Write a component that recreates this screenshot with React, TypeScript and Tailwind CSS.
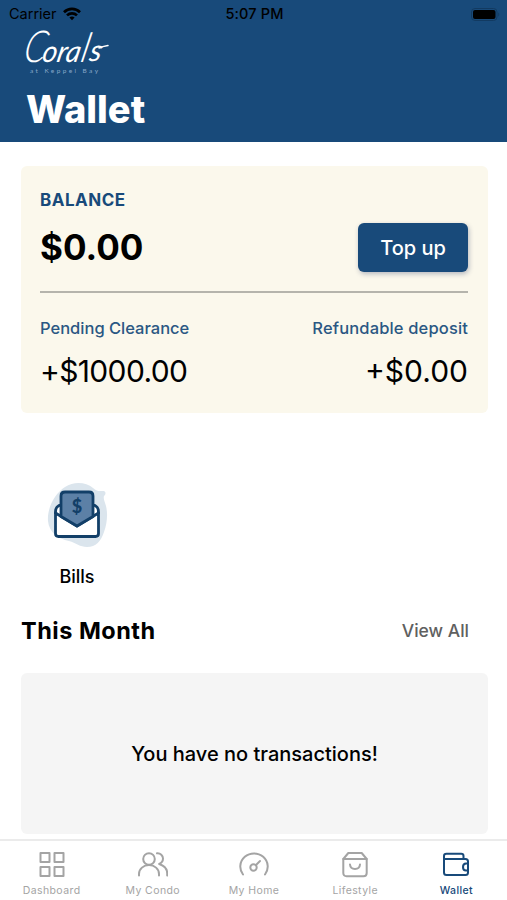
import type { ReactNode } from "react";
import clsx from "clsx";

const WifiIcon = () => (
  <svg width="18" height="14" viewBox="0 0 18 14" fill="none" stroke="currentColor" strokeWidth="2.7">
    <path d="M1 5.2C5.5 .8 12.5 .8 17 5.2" />
    <path d="M4 8.400c2.800-2.700 7.200-2.700 10 0" />
    <path d="M6.400 10.500c1.500-1.300 3.700-1.300 5.200 0L9 13.200z" fill="currentColor" stroke="none" />
  </svg>
);

const BatteryIcon = () => (
  <svg width="29" height="13" viewBox="0 0 29 13">
    <rect x=".5" y=".5" width="25.5" height="12" rx="3.5" fill="none" stroke="#123a61" />
    <rect x="2" y="2" width="22.5" height="9" rx="2" fill="#000" />
    <path d="M27.3 4.500v4c1.200-.5 1.200-3.500 0-4z" fill="#123a61" />
  </svg>
);

const Logo = () => (
  <svg
    className="-mt-5 -ml-2.5 overflow-visible"
    width="120"
    height="75"
    viewBox="-10 -20 120 75"
    fill="#fff"
    fontFamily="Lato, sans-serif"
  >
    <g transform="translate(-2 34) skewX(-12)" fontStyle="italic">
      <text fontSize="30">
        <tspan x="0" y="0" fontSize="44" fontWeight="300" textLength="22" lengthAdjust="spacingAndGlyphs">
          C
        </tspan>
        <tspan x="19" y="0" textLength="38" lengthAdjust="spacingAndGlyphs">
          ora
        </tspan>
        <tspan x="57" y="0" fontSize="41" fontWeight="300">
          l
        </tspan>
        <tspan x="66" y="-1" fontSize="30">
          s
        </tspan>
      </text>
    </g>
    {/* tail of the last letter */}
    <path d="M75 20c3-1.500 6-2 9-2.500" fill="none" stroke="#fff" strokeWidth="1.5" strokeLinecap="round" />
    <text x="6" y="45" fontSize="6.5" fill="#86a7c8" textLength="68" lengthAdjust="spacing">
      at Keppel Bay
    </text>
  </svg>
);

const BillsIcon = () => (
  <svg width="62" height="68" viewBox="0 0 62 68" fill="none">
    <path
      d="M18 6C27 0 39 1 46 7c4 4 7 3 11 3 2 1 2 3 0 5-1 3 1 6 2 10 2 8 1 18-2 26-3 9-8 15-17 15-7 0-11-4-18-6C11 58 2 51 1 40 0 28 7 13 18 6z"
      fill="#dbe5ed"
    />
    <path d="M8.500 33v-2c0-4 2-7 6-7h31c4 0 6 3 6 7v2" fill="#fff" stroke="#123f68" strokeWidth="2.8" />
    <path
      d="M8.500 32 30 45l21.500-13v20.500c0 2-1 3-3 3h-37c-2 0-3-1-3-3z"
      fill="#fff"
      stroke="#123f68"
      strokeWidth="2.8"
      strokeLinejoin="round"
    />
    <path
      d="M14 35.500V15c0-2.500 1.500-4 4-4h24c2.500 0 4 1.500 4 4v20.500L30 45z"
      fill="#5c80a6"
      stroke="#123f68"
      strokeWidth="2.8"
      strokeLinejoin="round"
    />
    <text x="30" y="32" textAnchor="middle" fontFamily="Lato, sans-serif" fontWeight="900" fontSize="18" fill="#123f68">
      $
    </text>
  </svg>
);

const iconProps = {
  width: 30,
  height: 28,
  viewBox: "0 0 30 28",
  fill: "none",
  stroke: "currentColor",
  strokeWidth: 2,
  strokeLinecap: "round" as const,
  strokeLinejoin: "round" as const,
};

const DashboardIcon = () => (
  <svg {...iconProps}>
    <path d="M3.500 3h9v9h-9zM17.500 3h9v9h-9zM3.500 17h9v9h-9zM17.500 17h9v9h-9z" />
  </svg>
);

const CondoIcon = () => (
  <svg {...iconProps}>
    <circle cx="11" cy="9" r="5.800" />
    <path d="M1 25.500V24c0-5 4.500-9 10-9s10 4 10 9v1.500" />
    <path d="M19 3.300c3.500-.3 6 2.200 6 5.200 0 2.800-1.500 4.500-3.800 5.500 4.500 1.500 8 5 8 9.500v2" />
  </svg>
);

const HomeIcon = () => (
  <svg {...iconProps}>
    <path d="M4 24.500A13.700 13.200 0 1 1 26 24.500" />
    <circle cx="14.500" cy="17.500" r="3.200" />
    <path d="m17 15 4-4" />
  </svg>
);

const LifestyleIcon = () => (
  <svg {...iconProps}>
    <path d="m3.300 9 5-6h13.400l5 6v14c0 2-1.200 3.200-3.200 3.200h-17c-2 0-3.200-1.200-3.200-3.200z" />
    <path d="M3.300 9h23.400M10 14.500c.5 6 9.500 6 10 0" />
  </svg>
);

const WalletIcon = () => (
  <svg {...iconProps}>
    <path d="M22.500 9V6c0-1.500-.8-2.300-2.300-2.300H5.500C3.900 3.700 3 4.600 3 6v16.500c0 1.500 1 2.500 2.500 2.500h19c1.500 0 2.500-1 2.500-2.500v-11C27 10 26 9 24.500 9H3.500" />
    <path d="M27 13.500h-2c-4 0-4 7 0 7h2z" />
  </svg>
);

type Tab = { label: string; icon: ReactNode; active?: boolean };

const tabs: Tab[] = [
  { label: "Dashboard", icon: <DashboardIcon /> },
  { label: "My Condo", icon: <CondoIcon /> },
  { label: "My Home", icon: <HomeIcon /> },
  { label: "Lifestyle", icon: <LifestyleIcon /> },
  { label: "Wallet", icon: <WalletIcon />, active: true },
];

const Header = () => (
  <header className="h-[142px] bg-[#184a7a]">
    <div className="grid h-7 grid-cols-3 items-center pl-[9px] pr-[7px] text-black">
      <div className="flex items-center gap-1.5 text-[14.5px]">
        Carrier <WifiIcon />
      </div>
      <div className="text-center text-[14.5px] font-medium tracking-[0.15px]">5:07 PM</div>
      <div className="flex justify-end">
        <BatteryIcon />
      </div>
    </div>
    <div className="flex h-[50px] items-start pl-6">
      <Logo />
    </div>
    <h1 className="ml-[26px] mt-2 text-[38px] leading-[46px] font-extrabold text-white">Wallet</h1>
  </header>
);

const BalanceCard = () => (
  <section className="mr-[19px] ml-[21px] mt-6 h-[247px] rounded-md bg-[#fbf8ec] pr-5 pl-[19px] pt-[23px]">
    <div className="text-[17px] leading-[22px] font-bold tracking-[0.5px] text-[#184a7a]">BALANCE</div>
    <div className="mt-[12px] flex h-[49px] items-center justify-between">
      <div className="text-[35px] font-bold">$0.00</div>
      <button className="h-[49px] w-[110px] rounded-md bg-[#184a7a] text-[20px] font-medium text-white shadow-[1px_2px_5px_rgba(24,40,90,0.3)]">
        Top up
      </button>
    </div>
    <div className="mt-[19px] h-[2px] bg-[#b5b4ac]" />
    <div className="mt-6 flex justify-between text-[16.5px] leading-[22px] font-medium text-[#2a5783]">
      <span>Pending Clearance</span>
      <span className="tracking-[0.15px]">Refundable deposit</span>
    </div>
    <div className="mt-3 flex justify-between text-[30px] leading-[40px]">
      <span className="tracking-[-0.65px]">+$1000.00</span>
      <span>+$0.00</span>
    </div>
  </section>
);

const TabBar = () => (
  <nav className="grid h-[61px] grid-cols-5 border-t-2 border-[#ebebeb] bg-white pl-px">
    {tabs.map((tab) => (
      <div
        key={tab.label}
        className={clsx(
          "flex flex-col items-center pt-[9px] text-[10.5px]",
          tab.active ? "text-[#184a7a]" : "text-[#a4a4a4]",
        )}
      >
        {tab.icon}
        <span className={clsx("mt-[5px] leading-4 tracking-[0.4px]", tab.active && "font-medium")}>{tab.label}</span>
      </div>
    ))}
  </nav>
);

export default function App() {
  return (
    <div className="flex h-[900px] w-[507px] flex-col overflow-hidden bg-white font-[Inter,sans-serif] text-black">
      <Header />
      <main className="flex-1">
        <BalanceCard />
        <div className="ml-[47px] mt-[68px] flex w-[62px] flex-col items-center">
          <BillsIcon />
          <span className="mt-[16px] mr-0.5 text-[18px] leading-6 font-medium">Bills</span>
        </div>
        <div className="mr-[19px] ml-[21px] mt-[26px] flex h-8 items-center justify-between pr-[19px]">
          <h2 className="text-[23.5px] font-bold tracking-[0.5px]">This Month</h2>
          <span className="text-[17.5px] font-medium text-[#606060]">View All</span>
        </div>
        <div className="mr-[19px] ml-[21px] mt-[26px] flex h-[161px] items-center justify-center rounded-md bg-[#f5f5f5] text-[20px] font-medium">
          You have no transactions!
        </div>
      </main>
      <TabBar />
    </div>
  );
}
